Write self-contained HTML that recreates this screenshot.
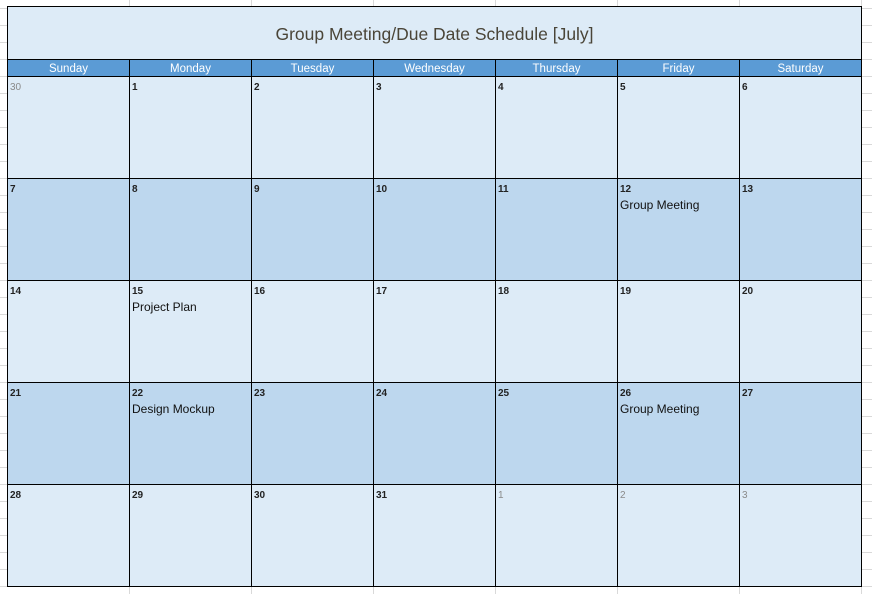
<!DOCTYPE html>
<html><head><style>
html,body{margin:0;padding:0}
body{width:872px;height:594px;position:relative;overflow:hidden;background:#fff;
background-image:repeating-linear-gradient(to bottom,transparent 0,transparent 8px,#d9d9d9 8px,#d9d9d9 9px,transparent 9px,transparent 17px);
background-size:100% 17px;background-position:0 0;font-family:"Liberation Sans",sans-serif}
.vg{position:absolute;top:0;width:1px;height:594px;background:#d9d9d9}
#t{position:absolute;left:7px;top:6px;width:853px;height:52px;background:#ddebf7;border:1px solid #000;border-bottom:none;text-align:center;line-height:54px;font-size:17.5px;color:#4a4538}
.h{position:absolute;top:59px;height:16px;background:#5b9bd5;color:#fff;font-size:11.5px;text-align:center;line-height:19px;border-left:1px solid #000;border-top:1px solid #000;border-bottom:1px solid #000}
.c{position:absolute;width:121px;height:101px;border-left:1px solid #000;border-bottom:1px solid #000;font-size:10px;color:#222;box-sizing:content-box}
.c span{position:absolute;left:2px;top:5px;font-weight:bold;font-size:10px}
.c span.g{color:#8a8a8a;font-weight:normal}
.c div{position:absolute;left:2px;top:19px;font-size:12px;color:#111}
.l{background:#ddebf7}.d{background:#bdd7ee}
</style></head><body>
<div class="vg" style="left:129px"></div><div class="vg" style="left:251px"></div><div class="vg" style="left:373px"></div><div class="vg" style="left:495px"></div><div class="vg" style="left:617px"></div><div class="vg" style="left:739px"></div><div class="vg" style="left:861px"></div>
<div id="t">Group Meeting/Due Date Schedule [July]</div>
<div id="grid"></div>
<script>
var days=["Sunday","Monday","Tuesday","Wednesday","Thursday","Friday","Saturday"];
var xs=[7,129,251,373,495,617,739];
var h="";
for(var i=0;i<7;i++){h+='<div class="h" style="left:'+xs[i]+'px;width:121px;'+(i==6?'border-right:1px solid #000;':'')+'">'+days[i]+'</div>';}
var nums=[30,1,2,3,4,5,6,7,8,9,10,11,12,13,14,15,16,17,18,19,20,21,22,23,24,25,26,27,28,29,30,31,1,2,3];
var ev={12:"Group Meeting",15:"Project Plan",22:"Design Mockup",26:"Group Meeting"};
for(var r=0;r<5;r++)for(var c=0;c<7;c++){var k=r*7+c,n=nums[k],g=(k==0||k>31);
h+='<div class="c '+(r%2?'d':'l')+'" style="left:'+xs[c]+'px;top:'+(77+r*102)+'px;'+(c==6?'border-right:1px solid #000;':'')+'"><span'+(g?' class="g"':'')+'>'+n+'</span>'+(!g&&ev[n]?'<div>'+ev[n]+'</div>':'')+'</div>';}
document.getElementById("grid").innerHTML=h;
</script>
</body></html>
